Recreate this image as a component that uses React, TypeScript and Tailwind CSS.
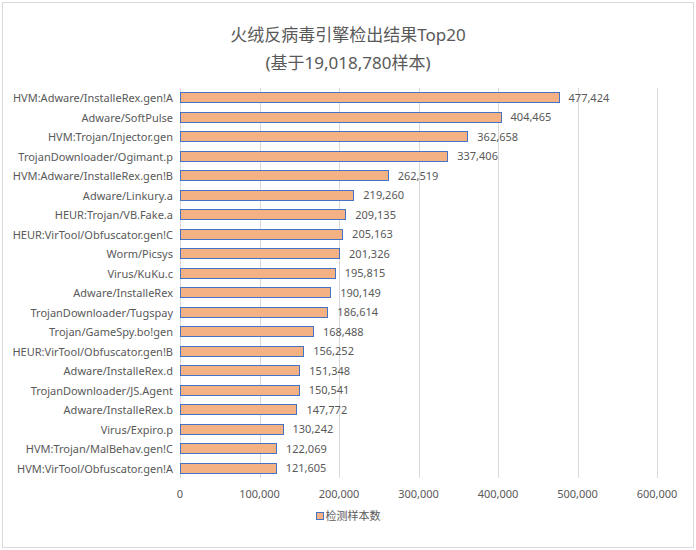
const data: [string, number][] = [
  ["HVM:Adware/InstalleRex.gen!A", 477424],
  ["Adware/SoftPulse", 404465],
  ["HVM:Trojan/Injector.gen", 362658],
  ["TrojanDownloader/Ogimant.p", 337406],
  ["HVM:Adware/InstalleRex.gen!B", 262519],
  ["Adware/Linkury.a", 219260],
  ["HEUR:Trojan/VB.Fake.a", 209135],
  ["HEUR:VirTool/Obfuscator.gen!C", 205163],
  ["Worm/Picsys", 201326],
  ["Virus/KuKu.c", 195815],
  ["Adware/InstalleRex", 190149],
  ["TrojanDownloader/Tugspay", 186614],
  ["Trojan/GameSpy.bo!gen", 168488],
  ["HEUR:VirTool/Obfuscator.gen!B", 156252],
  ["Adware/InstalleRex.d", 151348],
  ["TrojanDownloader/JS.Agent", 150541],
  ["Adware/InstalleRex.b", 147772],
  ["Virus/Expiro.p", 130242],
  ["HVM:Trojan/MalBehav.gen!C", 122069],
  ["HVM:VirTool/Obfuscator.gen!A", 121605],
];
const W = 477;
const ticks = ["0", "100,000", "200,000", "300,000", "400,000", "500,000", "600,000"];
export default function App() {
  return (
    <div className="w-[696px] h-[550px] bg-white p-[2px]" style={{ fontFamily: '"Noto Sans","Noto Sans CJK SC",sans-serif' }}>
      <div className="w-full h-full border border-[#d9d9d9] flex flex-col text-[#595959]">
        <div className="pt-[18px] text-center text-[17px] leading-[28px]">
          <div>火绒反病毒引擎检出结果Top20</div>
          <div>(基于19,018,780样本)</div>
        </div>
        <div className="flex mt-[11px]">
          <div className="w-[177px] flex flex-col pr-[7px] text-[11px] text-right">
            {data.map(([n]) => (
              <div key={n} className="h-[19.5px] leading-[19.5px] whitespace-nowrap">{n}</div>
            ))}
          </div>
          <div className="relative w-[480px] h-[390px]">
            {ticks.map((t, i) => (
              <div key={t} className="absolute top-0 bottom-0 w-px bg-[#d9d9d9]" style={{ left: i * 79.5 }} />
            ))}
            <div className="relative flex flex-col">
              {data.map(([n, v]) => (
                <div key={n} className="h-[19.5px] flex items-center">
                  <div className="h-[11px] bg-[#f4b183] border border-[#4472c4]" style={{ width: (v / 600000) * W }} />
                  <span className="ml-[9px] text-[11px]">{v.toLocaleString("en-US")}</span>
                </div>
              ))}
            </div>
            {ticks.map((t, i) => (
              <div key={"l" + t} className="absolute top-[398px] text-[11px] -translate-x-1/2" style={{ left: i * 79.5 }}>{t}</div>
            ))}
          </div>
        </div>
        <div className="mt-[30px] flex justify-center items-center text-[11px]">
          <span className="w-[8px] h-[8px] bg-[#f4b183] border border-[#4472c4] mr-[2px]" />检测样本数
        </div>
      </div>
    </div>
  );
}
